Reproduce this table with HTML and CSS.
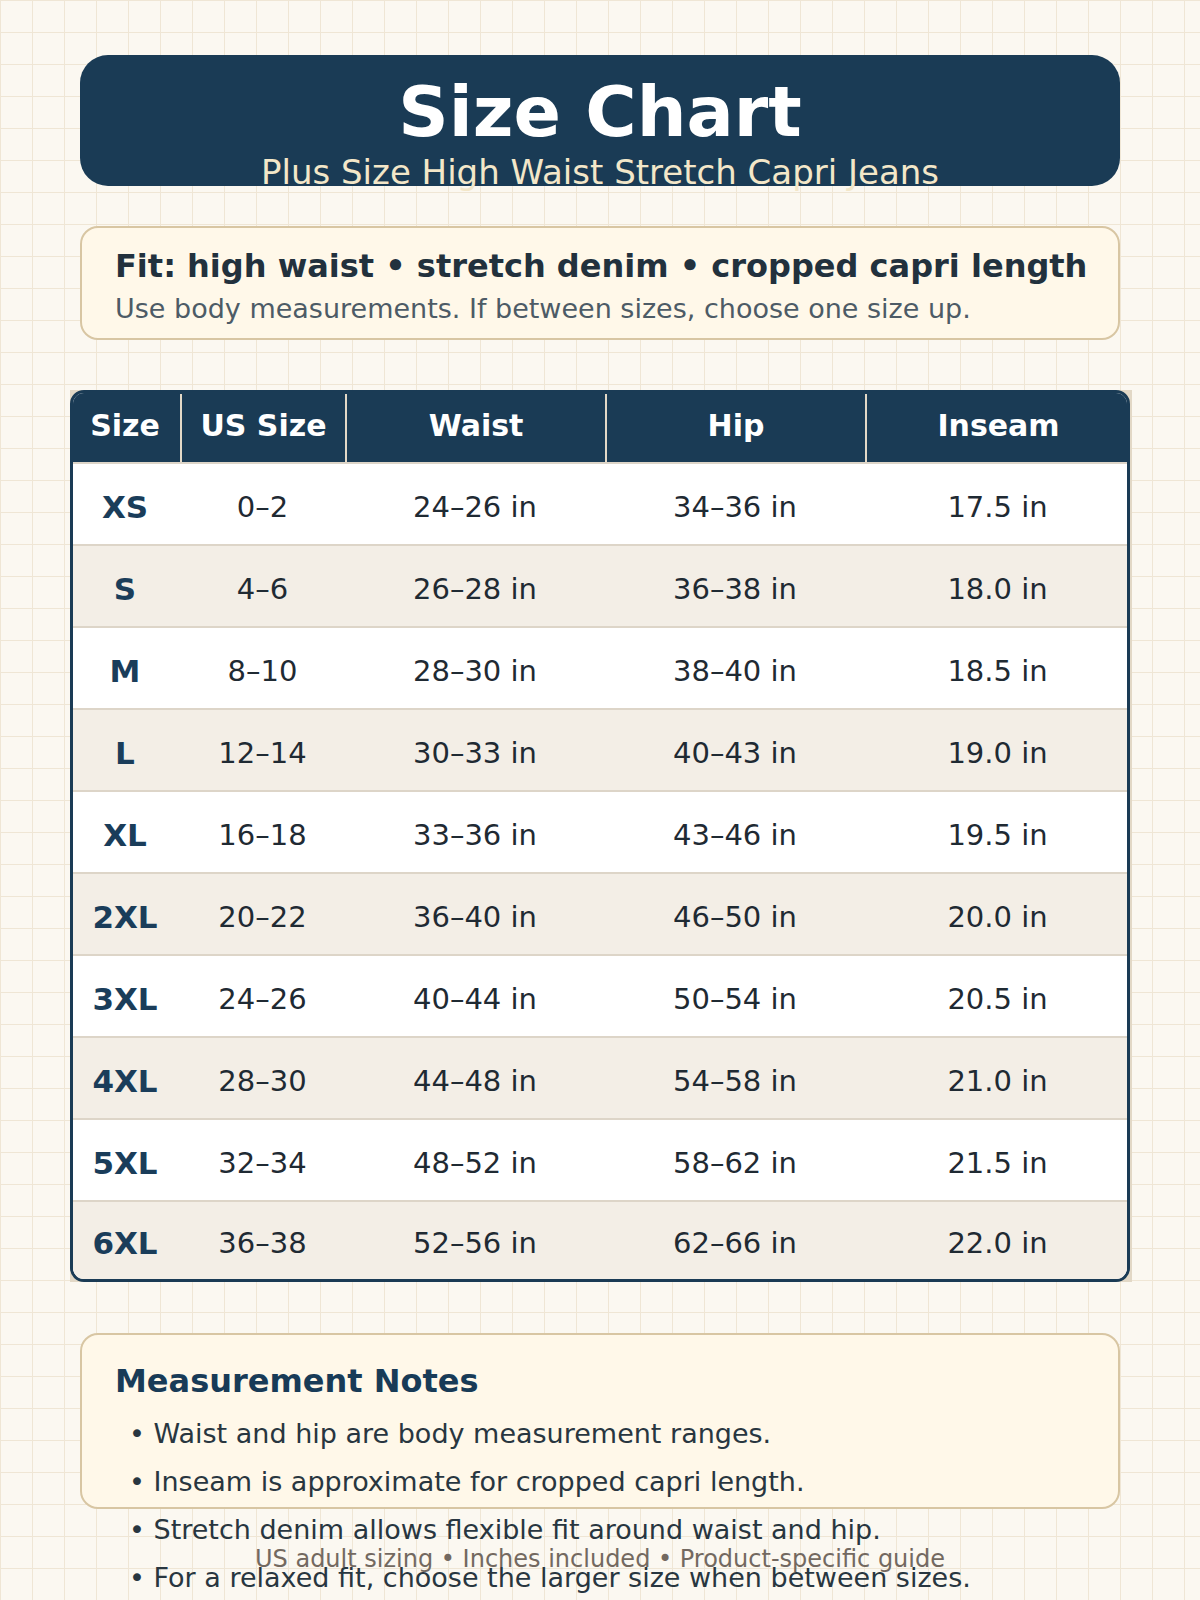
FILE: index.html
```html
<!DOCTYPE html>
<html lang="en">
<head>
<meta charset="utf-8">
<title>Size Chart</title>
<link rel="stylesheet" href="styles.css">
</head>
<body>
<div class="page">
  <header class="hero">
    <h1 class="title">Size Chart</h1>
    <p class="subtitle">Plus Size High Waist Stretch Capri Jeans</p>
  </header>

  <section class="fit">
    <p class="fit-title">Fit: high waist • stretch denim • cropped capri length</p>
    <p class="fit-note">Use body measurements. If between sizes, choose one size up.</p>
  </section>

  <div class="table-wrap">
    <div class="table">
      <div class="thead">
        <div class="th">Size</div>
        <div class="th">US Size</div>
        <div class="th">Waist</div>
        <div class="th">Hip</div>
        <div class="th">Inseam</div>
      </div>
      <div class="row"><div class="size">XS</div><div>0–2</div><div>24–26 in</div><div>34–36 in</div><div>17.5 in</div></div>
      <div class="row alt"><div class="size">S</div><div>4–6</div><div>26–28 in</div><div>36–38 in</div><div>18.0 in</div></div>
      <div class="row"><div class="size">M</div><div>8–10</div><div>28–30 in</div><div>38–40 in</div><div>18.5 in</div></div>
      <div class="row alt"><div class="size">L</div><div>12–14</div><div>30–33 in</div><div>40–43 in</div><div>19.0 in</div></div>
      <div class="row"><div class="size">XL</div><div>16–18</div><div>33–36 in</div><div>43–46 in</div><div>19.5 in</div></div>
      <div class="row alt"><div class="size">2XL</div><div>20–22</div><div>36–40 in</div><div>46–50 in</div><div>20.0 in</div></div>
      <div class="row"><div class="size">3XL</div><div>24–26</div><div>40–44 in</div><div>50–54 in</div><div>20.5 in</div></div>
      <div class="row alt"><div class="size">4XL</div><div>28–30</div><div>44–48 in</div><div>54–58 in</div><div>21.0 in</div></div>
      <div class="row"><div class="size">5XL</div><div>32–34</div><div>48–52 in</div><div>58–62 in</div><div>21.5 in</div></div>
      <div class="row alt last"><div class="size">6XL</div><div>36–38</div><div>52–56 in</div><div>62–66 in</div><div>22.0 in</div></div>
    </div>
  </div>

  <section class="notes">
    <h2 class="notes-title">Measurement Notes</h2>
    <ul class="notes-list">
      <li>Waist and hip are body measurement ranges.</li>
      <li>Inseam is approximate for cropped capri length.</li>
      <li>Stretch denim allows flexible fit around waist and hip.</li>
      <li>For a relaxed fit, choose the larger size when between sizes.</li>
    </ul>
  </section>

  <p class="footer">US adult sizing • Inches included • Product-specific guide</p>
</div>
</body>
</html>
```

FILE: styles.css
```css
html {
  background-color: #fbf8f1;
  background-image:
    linear-gradient(to right, #efe6d5 1px, transparent 1px),
    linear-gradient(to bottom, #efe6d5 1px, transparent 1px);
  background-size: 32px 32px;
}

body {
  margin: 0;
  font-family: "DejaVu Sans", "Liberation Sans", sans-serif;
}

.page {
  box-sizing: border-box;
  min-height: 1600px;
  display: flex;
  flex-direction: column;
  padding-top: 55px;
}

/* Header */
.hero {
  box-sizing: border-box;
  height: 131px;
  margin: 0 80px;
  background: #1a3b55;
  border-radius: 28px;
  display: flex;
  flex-direction: column;
  align-items: center;
  padding-top: 22px;
}

.title {
  margin: 0;
  font-size: 70px;
  line-height: 70px;
  font-weight: bold;
  color: #ffffff;
}

.subtitle {
  margin: 8px 0 0;
  font-size: 34px;
  line-height: 34px;
  color: #f3e7c9;
}

/* Fit box */
.fit {
  box-sizing: border-box;
  height: 114px;
  margin: 40px 80px 0;
  background: #fff8e9;
  border: 2px solid #d8c6a3;
  border-radius: 18px;
  padding: 22px 0 0 33px;
}

.fit-title {
  margin: 0;
  font-size: 32px;
  line-height: 32px;
  font-weight: bold;
  color: #22313d;
}

.fit-note {
  margin: 13px 0 0;
  font-size: 27px;
  line-height: 27px;
  color: #4d5b66;
}

/* Table */
.table-wrap {
  box-sizing: border-box;
  width: 1062px;
  margin: 50px 0 0 70px;
  background: #e2d8c6;
}

.table {
  box-sizing: border-box;
  width: 1060px;
  border: 3px solid #1a3b55;
  border-radius: 14px;
  overflow: hidden;
  background: #ffffff;
}

.thead,
.row {
  display: grid;
  grid-template-columns: 107px 165px 260px 260px 262px;
}

.thead {
  height: 69px;
  background: #1a3b55;
}

.th {
  display: flex;
  align-items: center;
  justify-content: center;
  padding-bottom: 5px;
  font-size: 30px;
  font-weight: bold;
  color: #ffffff;
}

.th + .th {
  border-left: 2px solid #e3d9c7;
  margin-top: 1px;
}

.thead > .th:first-child,
.row > div:first-child {
  padding-right: 3px;
}

.thead > .th:last-child,
.row > div:last-child {
  padding-left: 3px;
}

.row {
  box-sizing: border-box;
  height: 82px;
  border-top: 2px solid #ddd5c8;
  background: #ffffff;
}

.row.alt {
  background: #f3eee6;
}

.row.last {
  height: 79px;
}

.row > div {
  display: flex;
  align-items: center;
  justify-content: center;
  padding-top: 5px;
  font-size: 29px;
  color: #1f2a33;
}

.row > .size {
  font-size: 31px;
  font-weight: bold;
  color: #1a3d5a;
}

/* Notes */
.notes {
  box-sizing: border-box;
  height: 176px;
  margin: 51px 80px 0;
  background: #fff8e9;
  border: 2px solid #d8c6a3;
  border-radius: 18px;
  padding: 30px 0 0 33px;
}

.notes-title {
  margin: 0;
  font-size: 32px;
  line-height: 32px;
  font-weight: bold;
  color: #183b57;
}

.notes-list {
  position: relative;
  list-style: none;
  margin: 13px 0 0;
  padding: 0 0 0 14px;
}

.notes-list li {
  font-size: 27px;
  line-height: 48px;
  color: #283640;
}

.notes-list li::before {
  content: "• ";
}

.footer {
  margin: 38px 0 0;
  text-align: center;
  font-size: 24px;
  line-height: 24px;
  color: #736960;
}
```
